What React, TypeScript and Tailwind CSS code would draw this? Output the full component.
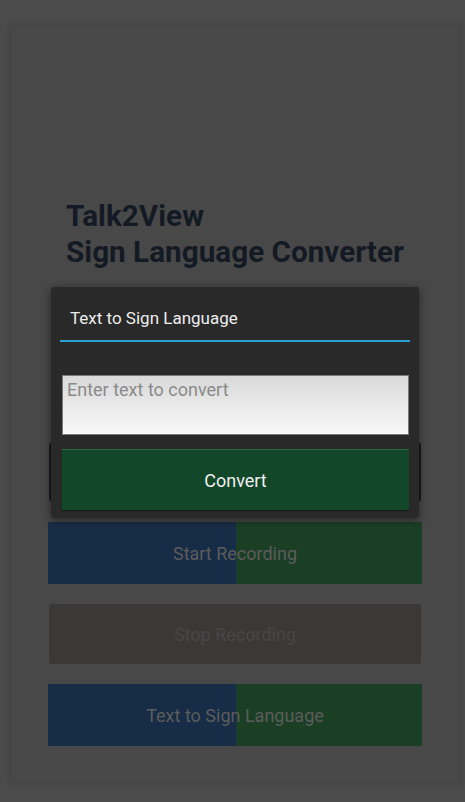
const actions = [
  { label: "Start Recording", split: true },
  { label: "Stop Recording", split: false },
  { label: "Text to Sign Language", split: true },
];

function SplitButton({ label }: { label: string }) {
  return (
    <div className="relative flex h-[62px] w-[374px] items-center justify-center overflow-hidden">
      <div className="absolute inset-y-0 left-0 w-[188px] bg-[#172c46]" />
      <div className="absolute inset-y-0 right-0 w-[186px] bg-[#1b3f25]" />
      <span className="relative text-[18px] text-[#5c5c5c]">{label}</span>
    </div>
  );
}

export default function App() {
  return (
    <div className="relative min-h-[802px] bg-[#4b4b4b] pt-[25px] pl-[11px] pr-[5px] font-['Roboto',sans-serif]">
      {/* page behind the dialog */}
      <div className="h-[758px] bg-[#484848] pl-[37px] pt-[173px] shadow-[0_0_6px_rgba(0,0,0,0.18)]">
        <h1 className="ml-[18px] text-[29.7px] font-bold leading-[36px] text-[#141a24]">
          Talk2View
          <br />
          Sign Language Converter
        </h1>
        <div className="mt-[172px] ml-px h-[60px] w-[372px] rounded-sm bg-[#1a1a1a]" />
        <div className="mt-[20px] flex flex-col gap-[20px]">
          {actions.map((a) =>
            a.split ? (
              <SplitButton key={a.label} label={a.label} />
            ) : (
              <div
                key={a.label}
                className="ml-px flex h-[60px] w-[372px] items-center justify-center rounded-[3px] bg-[#3c3837] text-[18px] text-[#4a4645]"
              >
                {a.label}
              </div>
            )
          )}
        </div>
      </div>
      <div className="h-[19px]" />

      {/* dialog */}
      <div className="absolute left-[51px] top-[287px] w-[368px] rounded-[3px] bg-[#292929] px-[9px] pb-[8px] shadow-[0_2px_8px_rgba(0,0,0,0.5)]">
        <div className="pt-[20px] pl-[10px] text-[17px] leading-[22px] text-[#ececec]">Text to Sign Language</div>
        <div className="mt-[11px] h-[2px] bg-[#2b9fcf]" />
        <div className="mt-[33px] ml-[2px] h-[60px] w-[347px] border border-[#7a7a7a] bg-gradient-to-b from-[#d9d9d9] to-[#f9f9f9] px-[4px] pt-[2px]">
          <span className="text-[18px] leading-[24px] text-[#8a8a8a]">Enter text to convert</span>
        </div>
        <div className="mt-[14px] ml-[2px] flex h-[61px] w-[347px] items-center justify-center border-t border-[#2c6a40] bg-[#12472a] text-[18px] text-[#f0f0f0] shadow-[0_1px_1px_rgba(0,0,0,0.4)]">
          Convert
        </div>
      </div>
    </div>
  );
}
